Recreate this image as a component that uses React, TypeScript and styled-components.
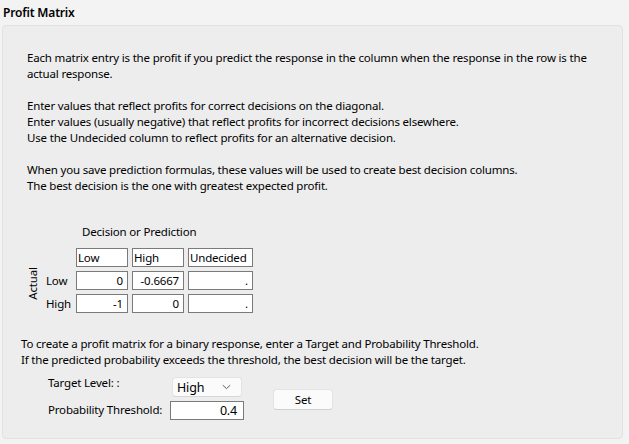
import React from "react";
import styled, { createGlobalStyle } from "styled-components";

const GlobalStyle = createGlobalStyle`
  html, body {
    margin: 0;
    padding: 0;
    background: #f3f3f3;
  }
  body {
    font-family: "Noto Sans", "Liberation Sans", sans-serif;
    font-size: 11.5px;
    letter-spacing: -0.18px;
    color: #000;
  }
`;

const Page = styled.div`
  width: 629px;
  height: 444px;
  padding: 0 6px 0 2px;
  box-sizing: border-box;
  display: flex;
  flex-direction: column;
`;

const Title = styled.div`
  font-weight: 600;
  font-size: 12px;
  line-height: 16px;
  padding: 5px 0 4px 1px;
  white-space: nowrap;
`;

const Panel = styled.div`
  flex: 0 0 414px;
  box-sizing: border-box;
  background: #ededed;
  border: 1px solid #e1e1e1;
  border-radius: 4px;
  padding: 24px 0 0 18px;
  display: flex;
  flex-direction: column;
`;

const Notes = styled.div`
  padding-left: 6px;
  display: flex;
  flex-direction: column;
  gap: 16px;
`;

const Paragraph = styled.div`
  line-height: 16px;
  white-space: nowrap;
`;

const Matrix = styled.div`
  margin-top: 30px;
  display: grid;
  grid-template-columns: 21px 26px 52px 52px 65px;
  grid-template-rows: 20px 19px 19px 19px;
  column-gap: 4px;
  row-gap: 4px;
`;

const AxisCaption = styled.div`
  grid-column: 3 / 6;
  margin-left: 6px;
  line-height: 16px;
  white-space: nowrap;
`;

const ActualLabel = styled.div`
  grid-column: 1;
  grid-row: 3 / 5;
  display: flex;
  align-items: center;
  justify-content: center;
  span {
    display: inline-block;
    transform: translate(1px, -9px) rotate(-90deg);
    white-space: nowrap;
  }
`;

const RowLabel = styled.div`
  grid-column: 2;
  line-height: 19px;
  white-space: nowrap;
`;

const Cell = styled.div<{ $align?: "left" | "right" }>`
  box-sizing: border-box;
  height: 19px;
  border: 1px solid #7a7a7a;
  background: #fff;
  line-height: 17px;
  padding: 0 ${(p) => (p.$align === "right" ? "4px" : "0")} 0
    ${(p) => (p.$align === "right" ? "0" : "1px")};
  text-align: ${(p) => p.$align ?? "left"};
  white-space: nowrap;
  overflow: hidden;
`;

const BinaryNote = styled(Paragraph)`
  margin-top: 23px;
`;

const Controls = styled.div`
  margin-top: 9px;
  margin-left: 27px;
  display: grid;
  grid-template-columns: 122px 74px auto;
  grid-template-rows: 19px 18px;
  row-gap: 5px;
`;

const FieldLabel = styled.div<{ $lift?: number }>`
  grid-column: 1;
  line-height: 18px;
  white-space: nowrap;
  margin-top: ${(p) => -(p.$lift ?? 0)}px;
`;

const Select = styled.div`
  grid-column: 2;
  grid-row: 1;
  margin-left: 2px;
  width: 70px;
  box-sizing: border-box;
  height: 20px;
  background: #fbfbfb;
  border: 1px solid #e3e3e3;
  border-bottom-color: #d6d6d6;
  border-radius: 4px;
  display: flex;
  align-items: center;
  justify-content: space-between;
  padding: 0 10px 0 4px;
  font-size: 12.5px;
`;

const NumberInput = styled.div`
  grid-column: 2;
  grid-row: 2;
  box-sizing: border-box;
  height: 19px;
  border: 1px solid #7a7a7a;
  background: #fff;
  text-align: right;
  line-height: 17px;
  padding-right: 6px;
  font-size: 12.5px;
`;

const Button = styled.div`
  grid-column: 3;
  grid-row: 1 / 3;
  align-self: center;
  margin: 2px 0 0 29px;
  width: 60px;
  height: 21px;
  box-sizing: border-box;
  background: #fbfbfb;
  border: 1px solid #e3e3e3;
  border-bottom-color: #d0d0d0;
  border-radius: 4px;
  display: flex;
  align-items: center;
  justify-content: center;
`;

const Chevron = () => (
  <svg width="9" height="6" viewBox="0 0 9 6" fill="none">
    <path d="M0.8 1.2 L4.5 4.6 L8.2 1.2" stroke="#606060" strokeWidth="1" />
  </svg>
);

const levels = ["Low", "High"];
const values = [
  ["0", "-0.6667", "."],
  ["-1", "0", "."],
];

const App = () => {
  return (
    <>
      <GlobalStyle />
      <Page>
        <Title>Profit Matrix</Title>
        <Panel>
          <Notes>
            <Paragraph>
              Each matrix entry is the profit if you predict the response in the column when the response in the row is the
              <br />
              actual response.
            </Paragraph>
            <Paragraph>
              Enter values that reflect profits for correct decisions on the diagonal.
              <br />
              Enter values (usually negative) that reflect profits for incorrect decisions elsewhere.
              <br />
              Use the Undecided column to reflect profits for an alternative decision.
            </Paragraph>
            <Paragraph>
              When you save prediction formulas, these values will be used to create best decision columns.
              <br />
              The best decision is the one with greatest expected profit.
            </Paragraph>
          </Notes>

          <Matrix>
            <AxisCaption>Decision or Prediction</AxisCaption>
            <div />
            <div />
            {[...levels, "Undecided"].map((h) => (
              <Cell key={h}>{h}</Cell>
            ))}
            <ActualLabel>
              <span>Actual</span>
            </ActualLabel>
            {levels.map((row, i) => (
              <React.Fragment key={row}>
                <RowLabel>{row}</RowLabel>
                {values[i].map((v, j) => (
                  <Cell key={j} $align="right">
                    {v}
                  </Cell>
                ))}
              </React.Fragment>
            ))}
          </Matrix>

          <BinaryNote>
            To create a profit matrix for a binary response, enter a Target and Probability Threshold.
            <br />
            If the predicted probability exceeds the threshold, the best decision will be the target.
          </BinaryNote>

          <Controls>
            <FieldLabel $lift={3}>Target Level: :</FieldLabel>
            <Select>
              <span>High</span>
              <Chevron />
            </Select>
            <Button>Set</Button>
            <FieldLabel>Probability Threshold:</FieldLabel>
            <NumberInput>0.4</NumberInput>
          </Controls>
        </Panel>
      </Page>
    </>
  );
};

export default App;
